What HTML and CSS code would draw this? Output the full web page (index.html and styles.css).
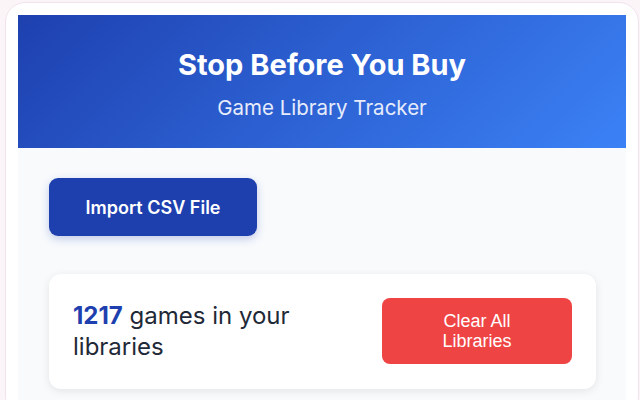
FILE: index.html
```html
<!DOCTYPE html>
<html lang="en">
<head>
<meta charset="utf-8">
<title>Stop Before You Buy</title>
<link rel="stylesheet" href="styles.css">
</head>
<body>
<div class="frame">
  <header class="header">
    <h1 class="title">Stop Before You Buy</h1>
    <p class="subtitle">Game Library Tracker</p>
  </header>
  <main class="main">
    <button class="import-btn" type="button">Import CSV File</button>
    <section class="stats-card">
      <p class="stats-text"><span class="count">1217</span> games in your libraries</p>
      <button class="clear-btn" type="button">Clear All Libraries</button>
    </section>
  </main>
</div>
</body>
</html>
```

FILE: styles.css
```css
html, body {
  margin: 0;
  padding: 0;
  overflow: hidden;
}
body {
  background: #fcf5f8;
  font-family: Inter, "Noto Sans", "Liberation Sans", sans-serif;
  height: 400px;
}
.frame {
  margin: 2px 0 0 5px;
  width: 608px;
  height: 400px;
  background: #ffffff;
  border: 1px solid #f1e3ec;
  border-radius: 20px;
  padding: 12px 12px 0;
  box-sizing: content-box;
  overflow: hidden;
}
.header {
  height: 133px;
  box-sizing: border-box;
  padding-top: 32px;
  background: linear-gradient(135deg, #1e40af 0%, #3b82f6 100%);
  color: #ffffff;
  text-align: center;
}
.title {
  margin: 0;
  font-size: 29px;
  font-weight: 700;
  line-height: 36px;
}
.subtitle {
  margin: 12px 0 0;
  font-size: 20.5px;
  line-height: 26px;
  color: #e6ecfb;
}
.main {
  background: #f8fafc;
  padding: 30px 30px 30px 31px;
  height: 300px;
}
.import-btn {
  display: block;
  width: 208px;
  height: 58px;
  border: none;
  border-radius: 9px;
  background: #1e40af;
  color: #ffffff;
  font-family: Inter, "Noto Sans", sans-serif;
  font-size: 18px;
  font-weight: 600;
  box-shadow: 0 3px 8px rgba(30, 64, 175, 0.25);
}
.stats-card {
  margin-top: 38px;
  background: #ffffff;
  border-radius: 12px;
  padding: 24px 24px 25px;
  display: flex;
  align-items: center;
  gap: 16px;
  box-shadow: 0 2px 8px rgba(0, 0, 0, 0.09);
}
.stats-text {
  flex: 1;
  margin: 0;
  font-size: 24px;
  line-height: 31px;
  color: #1f2937;
}
.count {
  font-weight: 700;
  color: #1e40af;
}
.clear-btn {
  flex: none;
  width: 190px;
  height: 66px;
  border: none;
  border-radius: 8px;
  background: #ef4444;
  color: #ffffff;
  font-family: "Liberation Sans", Arial, sans-serif;
  font-size: 18px;
  line-height: 20px;
  padding: 0 30px;
}
```
